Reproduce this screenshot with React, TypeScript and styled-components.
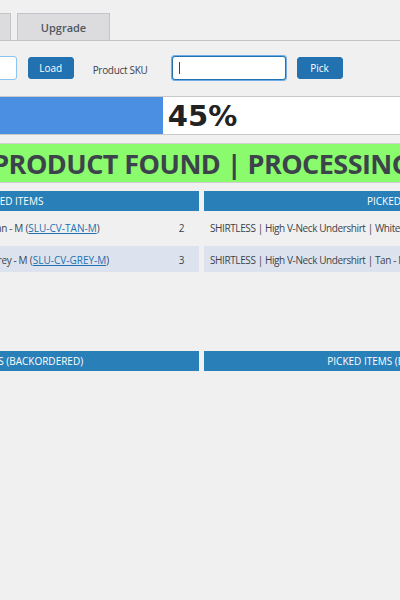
import React from "react";
import styled, { createGlobalStyle } from "styled-components";

const Global = createGlobalStyle`
  html, body { margin: 0; padding: 0; background: #f0f0f1; overflow: hidden; }
  body { font-family: "Open Sans", "Noto Sans", sans-serif; color: #3c434a; font-size: 11px; }
`;

const Page = styled.div`
  width: 787px;
  margin-left: -192px;
  padding-top: 13px;
`;

const TabBar = styled.div`
  display: flex;
  align-items: flex-end;
  gap: 6px;
  padding-left: 20px;
  border-bottom: 1px solid #c3c4c7;
  height: 27px;
`;

const Tab = styled.div<{ $w: number }>`
  box-sizing: border-box;
  width: ${(p) => p.$w}px;
  height: 27px;
  display: flex;
  align-items: center;
  justify-content: center;
  background: #dcdcde;
  border: 1px solid #c3c4c7;
  border-bottom: none;
  font-weight: 600;
  font-size: 11px;
  color: #50575e;
`;

const Toolbar = styled.div`
  display: flex;
  align-items: center;
  margin-top: 15px;
  height: 23px;
`;

const Label = styled.span<{ $ml: number }>`
  margin-left: ${(p) => p.$ml}px;
  margin-top: 4px;
  font-size: 10px;
  letter-spacing: -0.3px;
  color: #3c434a;
`;

const Input = styled.input<{ $w: number; $focus?: boolean }>`
  box-sizing: border-box;
  width: ${(p) => p.$w}px;
  height: 24px;
  border: 1px solid ${(p) => (p.$focus ? "#2271b1" : "#8cc2ec")};
  border-radius: 3px;
  background: #fff;
  box-shadow: ${(p) => (p.$focus ? "0 0 0 1px #72aee6" : "none")};
  outline: none;
  padding: 0 6px;
  font: inherit;
  caret-color: transparent;
`;

const Field = styled.div<{ $ml: number; $caret?: boolean }>`
  position: relative;
  display: flex;
  margin-left: ${(p) => p.$ml}px;
  &::after {
    content: "";
    display: ${(p) => (p.$caret ? "block" : "none")};
    position: absolute;
    left: 7px;
    top: 6px;
    width: 1px;
    height: 12px;
    background: #3c434a;
  }
`;

const Button = styled.button<{ $ml: number }>`
  box-sizing: border-box;
  margin-left: ${(p) => p.$ml}px;
  width: 46px;
  height: 22px;
  border: 1px solid #2271b1;
  border-radius: 3px;
  background: #2271b1;
  color: #fff;
  font-family: inherit;
  font-size: 10px;
  padding: 0;
`;

const Progress = styled.div`
  margin-top: 17px;
  margin-left: 2px;
  height: 39px;
  box-sizing: border-box;
  border: 1px solid #c9c9c9;
  background: #fff;
  display: grid;
`;

const Fill = styled.div`
  grid-area: 1 / 1;
  background: #4a8fe2;
  height: 100%;
`;

const Percent = styled.div`
  grid-area: 1 / 1;
  display: flex;
  align-items: center;
  justify-content: center;
  font-family: "DejaVu Sans", Verdana, sans-serif;
  font-weight: bold;
  font-size: 29px;
  color: #222;
`;

const Banner = styled.div`
  margin-top: 8px;
  height: 40px;
  box-sizing: border-box;
  border: 1px solid #d0d0d0;
  background: #8afb6c;
  display: flex;
  align-items: center;
  justify-content: center;
  font-weight: 700;
  font-size: 27px;
  letter-spacing: -0.55px;
  color: #3c434a;
  white-space: nowrap;
`;

const Columns = styled.div<{ $mt: number }>`
  display: grid;
  grid-template-columns: 1fr 1fr;
  gap: 5px;
  margin-top: ${(p) => p.$mt}px;
`;

const Panel = styled.div`
  display: flex;
  flex-direction: column;
  gap: 3px;
`;

const Header = styled.div`
  height: 20px;
  background: #2980b9;
  color: #fff;
  font-size: 10px;
  display: flex;
  align-items: center;
  justify-content: center;
  text-transform: uppercase;
`;

const Row = styled.div<{ $alt?: boolean; $indent: number }>`
  display: flex;
  align-items: center;
  justify-content: space-between;
  height: 26px;
  padding: 2px 15px 0 ${(p) => p.$indent}px;
  box-sizing: border-box;
  background: ${(p) => (p.$alt ? "#dce3ef" : "#f0f0f1")};
  font-size: 10px;
  letter-spacing: -0.4px;
  white-space: nowrap;
  margin-bottom: 3px;
`;

const Sku = styled.span`
  letter-spacing: 0;
`;

const SkuLink = styled.a`
  color: #2271b1;
  text-decoration: underline;
`;

type Item = { name: string; sku: string; qty: number };

const unpicked: Item[] = [
  { name: "SHIRTLESS | High V-Neck Undershirt | Tan - M", sku: "SLU-CV-TAN-M", qty: 2 },
  { name: "SHIRTLESS | High V-Neck Undershirt | Grey - M", sku: "SLU-CV-GREY-M", qty: 3 },
];
const picked: Item[] = [
  { name: "SHIRTLESS | High V-Neck Undershirt | White - M", sku: "SLU-CV-WHITE-M", qty: 1 },
  { name: "SHIRTLESS | High V-Neck Undershirt | Tan - M", sku: "SLU-CV-TAN-M", qty: 1 },
];

const ItemRow = ({ item, alt, indent }: { item: Item; alt?: boolean; indent: number }) => (
  <Row $alt={alt} $indent={indent}>
    <span>
      {item.name}
      <Sku>
        {" "}(<SkuLink href="#">{item.sku}</SkuLink>)
      </Sku>
    </span>
    <span>{item.qty}</span>
  </Row>
);

export default function App() {
  const pct = 45;
  return (
    <>
      <Global />
      <Page>
        <TabBar>
          <Tab $w={90}>Pick Order</Tab>
          <Tab $w={87}>Settings</Tab>
          <Tab $w={93}>Upgrade</Tab>
        </TabBar>
        <Toolbar>
          <Label $ml={64}>Order #</Label>
          <Field $ml={10}>
            <Input $w={100} />
          </Field>
          <Button $ml={11}>Load</Button>
          <Label $ml={19}>Product SKU</Label>
          <Field $ml={24} $caret>
            <Input $w={114} $focus />
          </Field>
          <Button $ml={11}>Pick</Button>
        </Toolbar>
        <Progress>
          <Fill style={{ width: `${pct}%` }} />
          <Percent>{pct}%</Percent>
        </Progress>
        <Banner>PRODUCT FOUND | PROCESSING</Banner>
        <Columns $mt={8}>
          <Panel>
            <Header>Unpicked Items</Header>
            {unpicked.map((it, i) => (
              <ItemRow key={i} item={it} alt={i % 2 === 1} indent={18} />
            ))}
          </Panel>
          <Panel>
            <Header>Picked Items</Header>
            {picked.map((it, i) => (
              <ItemRow key={i} item={it} alt={i % 2 === 1} indent={6} />
            ))}
          </Panel>
        </Columns>
        <Columns $mt={76}>
          <Panel>
            <Header>Unpicked Items (Backordered)</Header>
          </Panel>
          <Panel>
            <Header>Picked Items (Backordered)</Header>
          </Panel>
        </Columns>
      </Page>
    </>
  );
}
